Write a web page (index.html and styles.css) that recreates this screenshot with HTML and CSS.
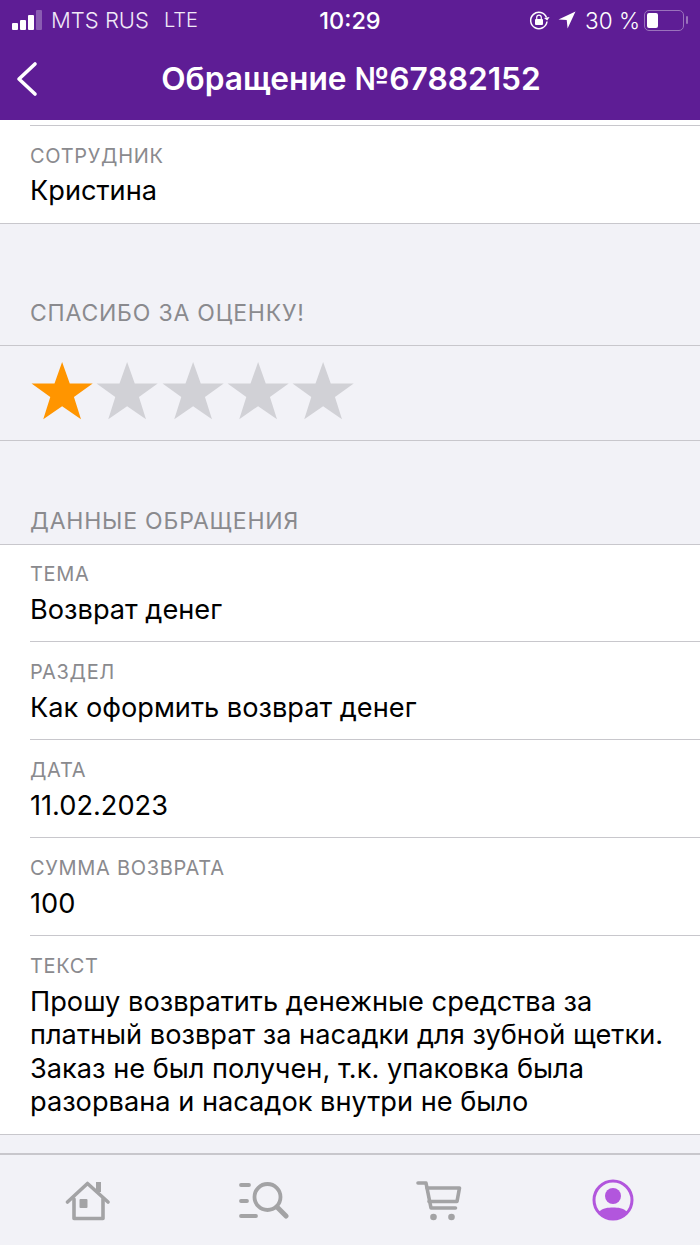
FILE: index.html

```html
<!DOCTYPE html>
<html lang="ru">
<head>
  <meta charset="UTF-8">
  <meta name="viewport" content="width=device-width, initial-scale=1.0">
  <title>Обращение</title>
  <link rel="stylesheet" href="styles.css">
</head>
<body>
  <div class="app">
    <header class="top">
      <div class="status">
        <div class="status-left">
          <span class="signal"><i class="b1"></i><i class="b2"></i><i class="b3"></i><i class="b4"></i></span>
          <span class="carrier">MTS RUS</span>
          <span class="carrier net">LTE</span>
        </div>
        <div class="clock">10:29</div>
        <div class="status-right">
          <svg class="ico-lock" width="22" height="22" viewBox="0 0 22 22" fill="none">
            <path d="M18.500 8.500A8.200 8.200 0 1 0 19 12.500" stroke="#fff" stroke-width="1.500"/>
            <path d="M16 9l3.200 2.400L21.600 8z" fill="#fff"/>
            <rect x="7" y="10" width="8" height="6" rx="1" fill="#fff"/>
            <path d="M8.700 10V8.500a2.300 2.300 0 0 1 4.600 0V10" stroke="#fff" stroke-width="1.200"/>
          </svg>
          <svg class="ico-loc" width="18" height="18" viewBox="0 0 18 18"><path d="M17.500 0.500L0.500 8.500l8.200.6.900 8.400z" fill="#fff"/></svg>
          <span class="percent">30 %</span>
          <span class="battery"><span class="battery-fill"></span></span>
          <span class="battery-cap"></span>
        </div>
      </div>
      <div class="nav">
        <svg class="back" width="26" height="38" viewBox="0 0 26 38" fill="none"><path d="M23 4L7 19l16 15" stroke="#fff" stroke-width="3.600" stroke-linecap="round" stroke-linejoin="round"/></svg>
        <h1>Обращение №67882152</h1>
      </div>
    </header>

    <main class="content">
      <section class="card card-first">
        <div class="row">
          <div class="row-label">СОТРУДНИК</div>
          <div class="row-value">Кристина</div>
        </div>
      </section>

      <div class="section-title title-thanks">СПАСИБО ЗА ОЦЕНКУ!</div>
      <section class="stars">
        <svg viewBox="0 0 65 60"><path class="star-on" d="M32 0l7.600 21.500H62.500L43.800 35l7 22L32 44 13.200 57l7-22L1.500 21.500h22.900z"/></svg>
        <svg viewBox="0 0 65 60"><path class="star-off" d="M32 0l7.600 21.500H62.500L43.800 35l7 22L32 44 13.200 57l7-22L1.500 21.500h22.900z"/></svg>
        <svg viewBox="0 0 65 60"><path class="star-off" d="M32 0l7.600 21.500H62.500L43.800 35l7 22L32 44 13.200 57l7-22L1.500 21.500h22.900z"/></svg>
        <svg viewBox="0 0 65 60"><path class="star-off" d="M32 0l7.600 21.500H62.500L43.800 35l7 22L32 44 13.200 57l7-22L1.500 21.500h22.900z"/></svg>
        <svg viewBox="0 0 65 60"><path class="star-off" d="M32 0l7.600 21.500H62.500L43.800 35l7 22L32 44 13.200 57l7-22L1.500 21.500h22.900z"/></svg>
      </section>

      <div class="section-title title-data">ДАННЫЕ ОБРАЩЕНИЯ</div>
      <section class="card">
        <div class="row row-top">
          <div class="row-label">ТЕМА</div>
          <div class="row-value">Возврат денег</div>
        </div>
        <div class="row">
          <div class="row-label">РАЗДЕЛ</div>
          <div class="row-value">Как оформить возврат денег</div>
        </div>
        <div class="row">
          <div class="row-label">ДАТА</div>
          <div class="row-value">11.02.2023</div>
        </div>
        <div class="row">
          <div class="row-label">СУММА ВОЗВРАТА</div>
          <div class="row-value">100</div>
        </div>
        <div class="row row-text">
          <div class="row-label">ТЕКСТ</div>
          <div class="row-value">Прошу возвратить денежные средства за<br>платный возврат за насадки для зубной щетки.<br>Заказ не был получен, т.к. упаковка была<br>разорвана и насадок внутри не было</div>
        </div>
      </section>
    </main>

    <nav class="tabs">
      <svg width="46" height="46" viewBox="0 0 46 46" fill="none" stroke="#a3a3a5" stroke-width="3.600" stroke-linecap="round" stroke-linejoin="round">
        <path d="M2.500 25L22.500 6.500 43 25"/>
        <path d="M9 22v19.500h29V22"/>
        <path d="M33.500 15V5" stroke-width="5" stroke-linecap="butt"/>
        <rect x="14.500" y="22" width="8" height="9" fill="#a3a3a5" stroke="none" rx="1"/>
      </svg>
      <svg width="52" height="46" viewBox="0 0 52 46" fill="none" stroke="#a3a3a5" stroke-width="3.800" stroke-linecap="round">
        <circle cx="30.500" cy="20" r="13"/>
        <path d="M41 31l8 8" stroke-width="5"/>
        <path d="M4 8h8M4 24h6M4 39h15"/>
      </svg>
      <svg width="48" height="46" viewBox="0 0 48 46" fill="none" stroke="#a3a3a5" stroke-width="3.600" stroke-linecap="round" stroke-linejoin="round">
        <path d="M4 6h8l5 25h24.500"/>
        <path d="M13 11h32.500L43 24.500H15"/>
        <circle cx="19.500" cy="40" r="3.300" fill="#a3a3a5" stroke="none"/>
        <circle cx="37.500" cy="40" r="3.300" fill="#a3a3a5" stroke="none"/>
      </svg>
      <svg width="44" height="44" viewBox="0 0 44 44" fill="none">
        <circle cx="22" cy="22" r="19" stroke="#b256dd" stroke-width="3"/>
        <circle cx="22" cy="18" r="8" fill="#b256dd"/>
        <path d="M7.500 34C12 30 17 29.500 22 29.500S32 30 36.500 34A18 18 0 0 1 7.500 34z" fill="#b256dd"/>
      </svg>
    </nav>
  </div>
</body>
</html>
```

FILE: styles.css

```css
* {
  box-sizing: border-box;
}

body {
  margin: 0;
  background-color: #f2f2f7;
  font-family: Inter, "Noto Sans", sans-serif;
}

.app {
  display: flex;
  flex-direction: column;
  width: 700px;
  height: 1245px;
  overflow: hidden;
}

.top {
  height: 120px;
  background-color: #5e1d95;
  color: #fff;
  flex-shrink: 0;
}

.status {
  display: grid;
  grid-template-columns: 1fr auto 1fr;
  align-items: center;
  height: 40px;
  padding: 0 12px 0 12px;
}

.status-left,
.status-right {
  display: flex;
  align-items: center;
}

.status-right {
  justify-content: flex-end;
}

.signal {
  display: flex;
  align-items: flex-end;
  gap: 2px;
  height: 20px;
  margin-right: 9px;
}

.signal i {
  width: 6px;
  border-radius: 1px;
  background-color: #fff;
}

.signal .b1 { height: 7px; }
.signal .b2 { height: 10px; }
.signal .b3 { height: 15px; }
.signal .b4 { height: 20px; background-color: #8a5cb2; }

.carrier {
  font-size: 22px;
  font-weight: 300;
  color: #f1e9f7;
}

.net {
  margin-left: 15px;
  font-size: 20px;
}

.clock {
  font-size: 23.5px;
  font-weight: 500;
}

.ico-lock {
  margin-right: 8px;
}

.ico-loc {
  margin-right: 9px;
}

.percent {
  font-size: 22.5px;
  font-weight: 300;
  margin-right: 4px;
}

.battery {
  display: block;
  width: 40px;
  height: 21px;
  padding: 2px;
  border: 1.5px solid #9a72bc;
  border-radius: 5px;
}

.battery-fill {
  display: block;
  width: 11px;
  height: 100%;
  background-color: #fff;
  border-radius: 2px;
}

.battery-cap {
  width: 2px;
  height: 8px;
  margin-left: 2px;
  background-color: #9a72bc;
  border-radius: 1px;
}

.nav {
  position: relative;
  display: flex;
  align-items: center;
  justify-content: center;
  height: 80px;
  padding: 0 0 3px 2px;
}

.nav h1 {
  margin: 0;
  font-size: 31.7px;
  font-weight: 600;
}

.back {
  position: absolute;
  left: 12px;
  top: 20px;
}

.content {
  flex: 1;
}

.card {
  background-color: #fff;
  border-top: 1px solid #c8c7cc;
  border-bottom: 1px solid #c8c7cc;
}

.card-first {
  height: 104px;
  border-top: none;
  padding-top: 5px;
}

.card-first .row {
  height: 98px;
  border-top: 1px solid #c8c7cc;
  border-bottom: none;
  padding-top: 18px;
}

.card-first .row-value {
  margin-top: 6px;
}

.row {
  height: 98px;
  margin-left: 30px;
  padding-top: 18px;
  border-bottom: 1px solid #c8c7cc;
}

.row-top {
  height: 97px;
  padding-top: 17px;
}

.row:last-child {
  border-bottom: none;
}

.row-text {
  height: 198px;
}

.row-label {
  font-size: 20px;
  line-height: 24px;
  letter-spacing: 0.7px;
  color: #8a8a8e;
}

.row-value {
  font-size: 27.2px;
  line-height: 33.3px;
  margin-top: 7px;
  color: #000;
}

.section-title {
  padding-left: 30px;
  font-size: 23px;
  line-height: 26px;
  letter-spacing: 0.8px;
  color: #8a8a8e;
}

.title-thanks {
  padding-top: 76px;
  height: 121px;
}

.title-data {
  padding-top: 67px;
  height: 103px;
}

.stars {
  display: flex;
  height: 96px;
  padding: 16px 0 0 30px;
  border-top: 1px solid #c8c7cc;
  border-bottom: 1px solid #c8c7cc;
}

.stars svg {
  display: block;
  width: 65.25px;
  height: 60.2px;
}

.star-on {
  fill: #ff9500;
}

.star-off {
  fill: #d1d1d6;
}

.tabs {
  display: grid;
  grid-template-columns: repeat(4, 175px);
  justify-items: center;
  align-items: center;
  height: 92px;
  flex-shrink: 0;
  border-top: 2px solid #c8c7cc;
  background-color: #f2f2f7;
}
```
